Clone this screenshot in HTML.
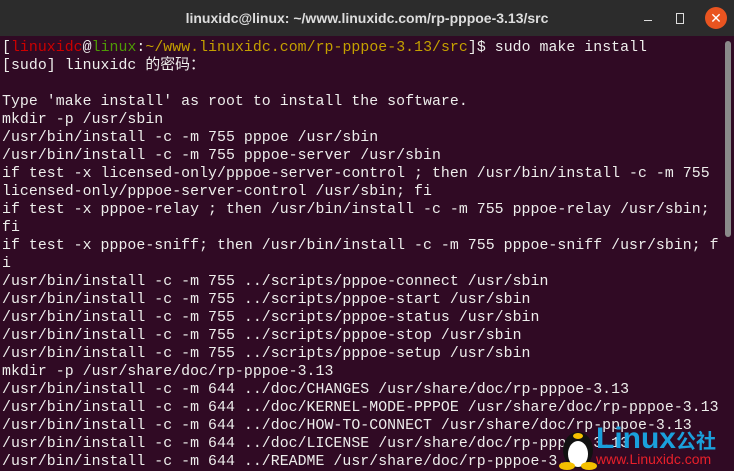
<!DOCTYPE html>
<html><head><meta charset="utf-8"><style>
body{margin:0;width:734px;height:471px;overflow:hidden;background:#300a24;position:relative}
.title{position:absolute;left:0;top:0;width:734px;height:36px;background:#2c2c2c;color:#ddd;font:bold 14px "Liberation Sans",sans-serif;text-align:center;line-height:36px}
.term{position:absolute;left:2px;top:39px;font:14.85px/18px "Liberation Mono","Noto Sans CJK SC",monospace;letter-spacing:0.05px;color:#eeeeec;white-space:pre}
.r{color:#cc0000}.g{color:#4e9a06}.y{color:#c4a000}
.sb{position:absolute;left:725px;top:41px;width:6px;height:196px;background:#8a8a8a;border-radius:3px}
.x{position:absolute;left:705px;top:7px;width:22px;height:22px;border-radius:50%;background:#e95420;color:#fff;font:14px "Liberation Sans";text-align:center;line-height:22px}
</style></head><body>
<div class="title">linuxidc@linux: ~/www.linuxidc.com/rp-pppoe-3.13/src</div>
<div style="position:absolute;left:644px;top:20px;width:8px;height:1px;background:#ddd"></div>
<div style="position:absolute;left:676px;top:13px;width:6px;height:9px;border:1px solid #ddd"></div>
<div class="x">✕</div>
<div class="sb"></div>
<div class="term">[<span class="r">linuxidc</span>@<span class="g">linux</span>:<span class="y">~/www.linuxidc.com/rp-pppoe-3.13/src</span>]$ sudo make install
[sudo] linuxidc 的密码：

Type 'make install' as root to install the software.
mkdir -p /usr/sbin
/usr/bin/install -c -m 755 pppoe /usr/sbin
/usr/bin/install -c -m 755 pppoe-server /usr/sbin
if test -x licensed-only/pppoe-server-control ; then /usr/bin/install -c -m 755
licensed-only/pppoe-server-control /usr/sbin; fi
if test -x pppoe-relay ; then /usr/bin/install -c -m 755 pppoe-relay /usr/sbin;
fi
if test -x pppoe-sniff; then /usr/bin/install -c -m 755 pppoe-sniff /usr/sbin; f
i
/usr/bin/install -c -m 755 ../scripts/pppoe-connect /usr/sbin
/usr/bin/install -c -m 755 ../scripts/pppoe-start /usr/sbin
/usr/bin/install -c -m 755 ../scripts/pppoe-status /usr/sbin
/usr/bin/install -c -m 755 ../scripts/pppoe-stop /usr/sbin
/usr/bin/install -c -m 755 ../scripts/pppoe-setup /usr/sbin
mkdir -p /usr/share/doc/rp-pppoe-3.13
/usr/bin/install -c -m 644 ../doc/CHANGES /usr/share/doc/rp-pppoe-3.13
/usr/bin/install -c -m 644 ../doc/KERNEL-MODE-PPPOE /usr/share/doc/rp-pppoe-3.13
/usr/bin/install -c -m 644 ../doc/HOW-TO-CONNECT /usr/share/doc/rp-pppoe-3.13
/usr/bin/install -c -m 644 ../doc/LICENSE /usr/share/doc/rp-pppoe-3.13
/usr/bin/install -c -m 644 ../README /usr/share/doc/rp-pppoe-3.13</div>
<svg style="position:absolute;left:558px;top:422px" width="40" height="48">
<ellipse cx="20" cy="28" rx="15" ry="18" fill="#111"/><ellipse cx="20" cy="32" rx="10" ry="13" fill="#fff"/>
<ellipse cx="20" cy="14" rx="5" ry="3" fill="#f5c000"/><ellipse cx="9" cy="44" rx="8" ry="4" fill="#f5c000"/><ellipse cx="31" cy="44" rx="8" ry="4" fill="#f5c000"/></svg>
<div style="position:absolute;left:596px;top:424px;font:bold 30px 'Liberation Sans',sans-serif;color:#1aa0dc;line-height:30px">Linux<span style="font:bold 20px 'Noto Sans CJK SC',sans-serif">公社</span></div>
<div style="position:absolute;left:596px;top:451px;font:14px 'Liberation Sans',sans-serif;color:#e8202a">www.Linuxidc.com</div>
</body></html>
